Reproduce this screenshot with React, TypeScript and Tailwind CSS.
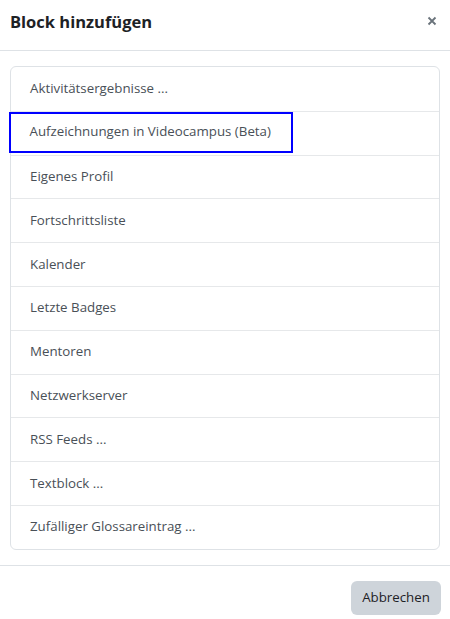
import React from "react";

const items = [
  "Aktivitätsergebnisse ...",
  "Aufzeichnungen in Videocampus (Beta)",
  "Eigenes Profil",
  "Fortschrittsliste",
  "Kalender",
  "Letzte Badges",
  "Mentoren",
  "Netzwerkserver",
  "RSS Feeds ...",
  "Textblock ...",
  "Zufälliger Glossareintrag ...",
];

export default function App() {
  return (
    <div
      className="w-[450px] h-[619px] bg-white flex flex-col overflow-hidden"
      style={{ fontFamily: '"Open Sans", "Noto Sans", sans-serif' }}
    >
      <div className="h-[51px] shrink-0 flex items-center justify-between pl-[10px] pr-[15px] border-b border-[#dee2e6]">
        <h5 className="text-[16.5px] font-bold text-[#1d2125] leading-none -mt-[6px]">Block hinzufügen</h5>
        <svg width="10" height="10" viewBox="0 0 10 10" className="-mt-[8px] -mr-[2px]">
          <path d="M1.5 1.5 L8.5 8.5 M8.5 1.5 L1.5 8.5" stroke="#6a737b" strokeWidth="1.8" />
        </svg>
      </div>
      <div className="px-[10px] pt-[15px] pb-[15px] border-b border-[#dee2e6]">
        <div className="border border-[#dee2e6] rounded-[6px] flex flex-col">
          {items.map((t, i) => (
            <div
              key={t}
              className={`h-[43.8px] flex items-center text-[13.3px] text-[#495057] ${i > 0 ? "border-t border-[#e6e8ea]" : ""}`}
            >
              {i === 1 ? (
                <span className="h-[41px] -ml-[2px] -mt-[2px] flex items-center pl-[18.5px] pr-[20px] border-[2.5px] border-[#0000ff]">
                  {t}
                </span>
              ) : (
                <span className="pl-[19px]">{t}</span>
              )}
            </div>
          ))}
        </div>
      </div>
      <div className="flex justify-end pr-[9px] pt-[15px]">
        <button className="w-[90px] h-[34px] rounded-[6px] bg-[#ced4da] text-[#1d2125] text-[13.3px]">
          Abbrechen
        </button>
      </div>
    </div>
  );
}
